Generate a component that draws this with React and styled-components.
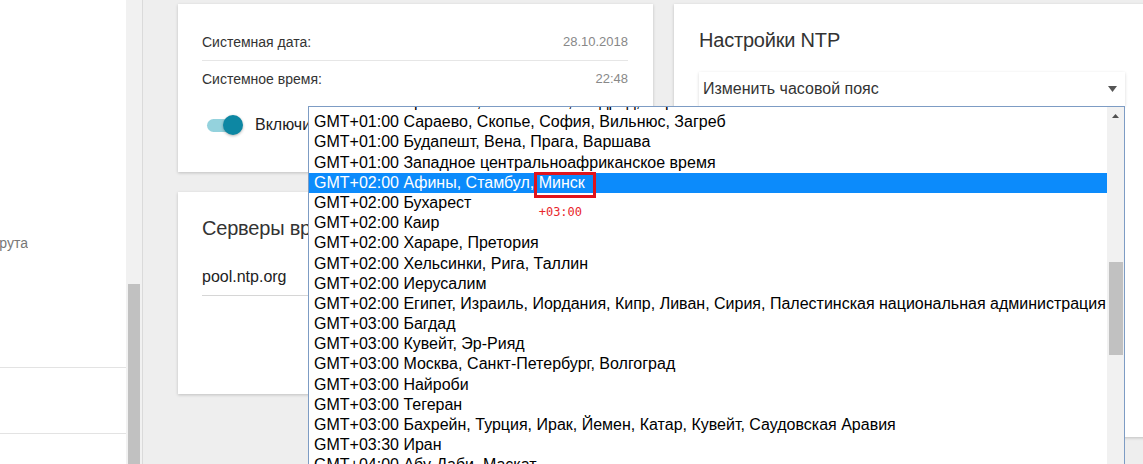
import React, { useLayoutEffect, useRef } from 'react';
import styled, { createGlobalStyle } from 'styled-components';

const GlobalStyle = createGlobalStyle`
  html, body {
    margin: 0;
    padding: 0;
    height: 100%;
    overflow: hidden;
    background: #eeeeee;
  }
  body {
    font-family: "Liberation Sans", Arial, sans-serif;
    color: #333;
  }
  #root { height: 100%; }
  * { box-sizing: border-box; }
`;

const zones = [
  { offset: '+01:00', name: 'Брюссель, Копенгаген, Мадрид, Париж' },
  { offset: '+01:00', name: 'Сараево, Скопье, София, Вильнюс, Загреб' },
  { offset: '+01:00', name: 'Будапешт, Вена, Прага, Варшава' },
  { offset: '+01:00', name: 'Западное центральноафриканское время' },
  { offset: '+02:00', name: 'Афины, Стамбул, ', mark: 'Минск', note: '+03:00', selected: true },
  { offset: '+02:00', name: 'Бухарест' },
  { offset: '+02:00', name: 'Каир' },
  { offset: '+02:00', name: 'Хараре, Претория' },
  { offset: '+02:00', name: 'Хельсинки, Рига, Таллин' },
  { offset: '+02:00', name: 'Иерусалим' },
  { offset: '+02:00', name: 'Египет, Израиль, Иордания, Кипр, Ливан, Сирия, Палестинская национальная администрация' },
  { offset: '+03:00', name: 'Багдад' },
  { offset: '+03:00', name: 'Кувейт, Эр-Рияд' },
  { offset: '+03:00', name: 'Москва, Санкт-Петербург, Волгоград' },
  { offset: '+03:00', name: 'Найроби' },
  { offset: '+03:00', name: 'Тегеран' },
  { offset: '+03:00', name: 'Бахрейн, Турция, Ирак, Йемен, Катар, Кувейт, Саудовская Аравия' },
  { offset: '+03:30', name: 'Иран' },
  { offset: '+04:00', name: 'Абу-Даби, Маскат' },
  { offset: '+04:00', name: 'Баку, Тбилиси, Ереван' },
  { offset: '+04:00', name: 'Порт-Луи' },
];

/* ---------- page frame ---------- */

const Page = styled.div`
  display: flex;
  width: 1143px;
  height: 464px;
  overflow: hidden;
`;

const Sidebar = styled.aside`
  flex: none;
  width: 126px;
  background: #fff;
  display: flex;
  flex-direction: column;
  overflow: hidden;
`;

const SideSection = styled.div`
  flex: none;
  height: ${p => p.$height}px;
  padding-top: ${p => p.$pad || 0}px;
  border-bottom: 1px solid #e3e3e3;
`;

const SideNote = styled.div`
  display: flex;
  justify-content: flex-end;
  width: 28px;
  overflow: hidden;
  white-space: nowrap;
  font-size: 14px;
  line-height: 20px;
  color: #777;
`;

const SideScroll = styled.div`
  flex: none;
  width: 17px;
  background: #f1f1f1;
  border-right: 1px solid #dadada;
  padding: 284px 2px 0 2px;
  display: flex;
`;

const SideThumb = styled.div`
  flex: 1;
  background: #c1c1c1;
`;

const Main = styled.main`
  flex: 1;
  min-width: 0;
  padding: 4px 0 0 35px;
  display: grid;
  grid-template-columns: 475px 475px;
  column-gap: 21px;
  align-items: start;
  overflow: hidden;
`;

const Column = styled.div`
  display: flex;
  flex-direction: column;
  gap: 20px;
`;

const Card = styled.section`
  background: #fff;
  box-shadow: 0 1px 3px rgba(0, 0, 0, 0.2);
  padding: ${p => p.$pad};
  height: ${p => p.$height}px;
`;

const Title = styled.h2`
  margin: 0;
  font-family: "Liberation Sans", Arial, sans-serif;
  font-weight: normal;
  font-size: 20px;
  line-height: 28px;
  letter-spacing: -0.2px;
  color: #333;
  white-space: nowrap;
`;

/* ---------- system info card ---------- */

const InfoRow = styled.div`
  display: flex;
  justify-content: space-between;
  align-items: center;
  padding: 8px 0;
  line-height: 20px;
  border-bottom: ${p => (p.$last ? 'none' : '1px solid #e6e6e6')};
`;

const InfoLabel = styled.span`
  font-size: 14px;
  color: #333;
`;

const InfoValue = styled.span`
  font-size: 13px;
  color: #888;
`;

const ToggleRow = styled.label`
  display: flex;
  align-items: center;
  gap: 14px;
  margin-top: 16px;
  height: 24px;
  padding-left: 5px;
  white-space: nowrap;
`;

const SwitchTrack = styled.span`
  position: relative;
  display: inline-block;
  width: 34px;
  height: 13px;
  border-radius: 7px;
  background: ${p => (p.$on ? '#94d2dd' : '#c8c8c8')};
`;

const SwitchKnob = styled.span`
  position: absolute;
  top: 50%;
  left: ${p => (p.$on ? '16px' : '-2px')};
  width: 20px;
  height: 20px;
  margin-top: -10px;
  border-radius: 50%;
  background: ${p => (p.$on ? '#0d87a3' : '#f5f5f5')};
  box-shadow: 0 1px 3px rgba(0, 0, 0, 0.3);
`;

const ToggleText = styled.span`
  font-size: 16px;
  color: #222;
`;

/* ---------- servers card ---------- */

const ServerField = styled.div`
  margin-top: 17px;
  padding: 8px 0;
  font-size: 16px;
  line-height: 20px;
  color: #222;
  border-bottom: 1px solid #d6d6d6;
`;

/* ---------- NTP settings card & timezone select ---------- */

const SelectBox = styled.div`
  position: relative;
  margin-top: 18px;
  height: 34px;
  display: flex;
  align-items: center;
  justify-content: space-between;
  padding: 0 8px 0 4px;
  background: #fff;
  box-shadow: 0 1px 3px rgba(0, 0, 0, 0.16);
  font-size: 16px;
  color: #333;
`;

const Caret = styled.svg`
  width: 9px;
  height: 6px;
  fill: #555;
`;

const Popup = styled.div`
  position: absolute;
  top: 100%;
  right: 0;
  width: 817px;
  height: 380px;
  display: flex;
  background: #fff;
  border: 1px solid #7d9cc4;
  z-index: 10;
`;

const OptionViewport = styled.div`
  flex: 1;
  min-width: 0;
  overflow: hidden;
`;

const Option = styled.div`
  height: 20.2px;
  line-height: 20px;
  padding-left: 5px;
  font-size: 16px;
  white-space: nowrap;
  color: ${p => (p.$selected ? '#fff' : '#000')};
  background: ${p => (p.$selected ? '#0c8bfb' : 'transparent')};
`;

const Marked = styled.span`
  position: relative;
`;

const MarkFrame = styled.span`
  position: absolute;
  left: -5px;
  top: -2px;
  width: 62px;
  height: 26px;
  border: 3px solid #e0141c;
`;

const MarkNote = styled.span`
  position: absolute;
  left: 0;
  top: 31px;
  font-family: "DejaVu Sans Mono", "Liberation Mono", monospace;
  font-size: 12px;
  line-height: 14px;
  color: #e8262b;
`;

const ListScroll = styled.div`
  flex: none;
  width: 17px;
  background: #f1f1f1;
  display: flex;
  flex-direction: column;
  align-items: center;
`;

const ScrollArrow = styled.div`
  height: 17px;
  display: flex;
  align-items: center;
  justify-content: center;
  svg { width: 7px; height: 4px; fill: #505050; }
`;

const ListThumb = styled.div`
  margin-top: 138px;
  width: 14px;
  height: 93px;
  background: #c1c1c1;
`;

function TimezoneList() {
  const viewport = useRef(null);
  useLayoutEffect(() => {
    if (viewport.current) viewport.current.scrollTop = 15;
  }, []);
  return (
    <Popup>
      <OptionViewport ref={viewport}>
        {zones.map((z, i) => (
          <Option key={i} $selected={z.selected}>
            GMT{z.offset} {z.name}
            {z.mark && (
              <Marked>
                {z.mark}
                <MarkFrame />
                <MarkNote>{z.note}</MarkNote>
              </Marked>
            )}
          </Option>
        ))}
      </OptionViewport>
      <ListScroll>
        <ScrollArrow>
          <svg viewBox="0 0 7 4"><path d="M0 4 L3.5 0 L7 4 Z" /></svg>
        </ScrollArrow>
        <ListThumb />
      </ListScroll>
    </Popup>
  );
}

export default function App() {
  return (
    <>
      <GlobalStyle />
      <Page>
        <Sidebar>
          <SideSection $height={368} $pad={233}>
            <SideNote>Таблица маршрута</SideNote>
          </SideSection>
          <SideSection $height={66} />
        </Sidebar>
        <SideScroll>
          <SideThumb />
        </SideScroll>
        <Main>
          <Column>
            <Card $pad="20px 25px 0 24px" $height={168}>
              <InfoRow>
                <InfoLabel>Системная дата:</InfoLabel>
                <InfoValue>28.10.2018</InfoValue>
              </InfoRow>
              <InfoRow $last>
                <InfoLabel>Системное время:</InfoLabel>
                <InfoValue>22:48</InfoValue>
              </InfoRow>
              <ToggleRow>
                <SwitchTrack $on>
                  <SwitchKnob $on />
                </SwitchTrack>
                <ToggleText>Включить синхронизацию времени</ToggleText>
              </ToggleRow>
            </Card>
            <Card $pad="22px 25px 0 24px" $height={202}>
              <Title>Серверы времени</Title>
              <ServerField>pool.ntp.org</ServerField>
            </Card>
          </Column>
          <Card $pad="22px 24px 0 25px" $height={433}>
            <Title>Настройки NTP</Title>
            <SelectBox>
              <span>Изменить часовой пояс</span>
              <Caret viewBox="0 0 9 6"><path d="M0 0 H9 L4.5 6 Z" /></Caret>
              <TimezoneList />
            </SelectBox>
          </Card>
        </Main>
      </Page>
    </>
  );
}
